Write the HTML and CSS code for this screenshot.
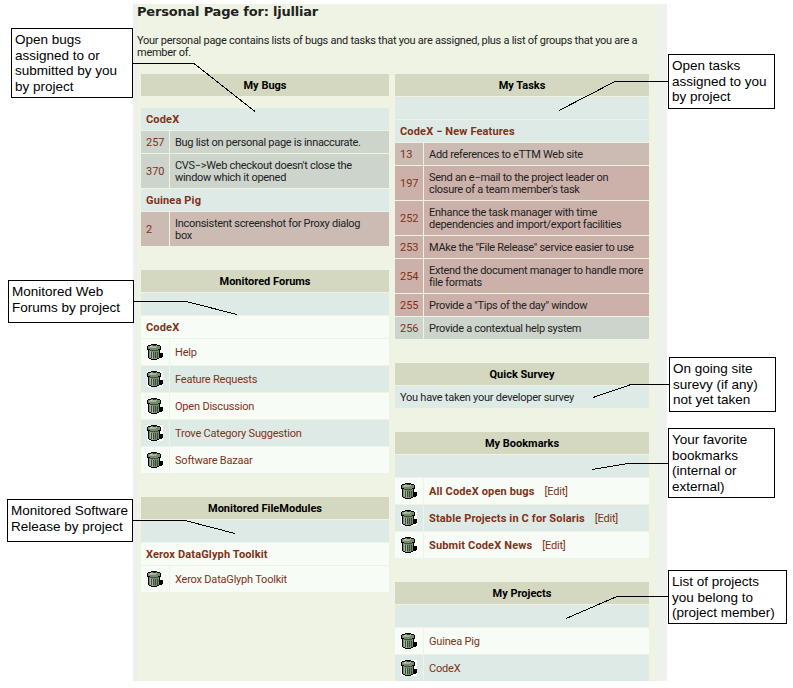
FILE: index.html
```
<!DOCTYPE html>
<html lang="en">
<head>
<meta charset="utf-8">
<title>Personal Page for: ljulliar</title>
<link rel="stylesheet" href="styles.css">
</head>
<body>
<svg class="defs" aria-hidden="true">
  <symbol id="trash" viewBox="0 0 16 16" shape-rendering="crispEdges">
    <path fill="#000" d="M4 0h6v1h3v1h1v4h-1v3h3v4h-1v1h-3v1h-2v1H4v-1H2v-1H1V6H0V2h1V1h3z"/>
    <path fill="#75896e" d="M4 1h6v1h3v3h-2v1H3V5H1V2h3z"/>
    <path fill="#a3b497" d="M3 2h7v1H9v1H2V3h1z"/>
    <path fill="#c3cfb8" d="M3 2h2v1H3z"/>
    <path fill="#283728" d="M6 1h3v1H6z"/>
    <path fill="#75896e" d="M2 6h10v8h-2v1H4v-1H2z"/>
    <path fill="#a4b599" d="M3 7h1v7H3zM5 8h1v7H5z"/>
    <path fill="#3c4e3b" d="M3 6h8v1H3zM4 8h1v6H4zM6 8h1v6H6zM8 8h1v6H8zM10 8h1v6h-1z"/>
  </symbol>
</svg>
<main class="page">
  <h1>Personal Page for: ljulliar</h1>
  <p class="intro">Your personal page contains lists of bugs and tasks that you are assigned, plus a list of groups that you are a<br>member of.</p>
  <div class="columns">
    <div class="column">
      <section class="box bugs">
        <h2>My Bugs</h2>
        <h3 class="mint">CodeX</h3>
        <div class="row sage"><a>257</a><span>Bug list on personal page is innaccurate.</span></div>
        <div class="row sage"><a>370</a><span>CVS−&gt;Web checkout doesn't close the<br>window which it opened</span></div>
        <h3 class="mint">Guinea Pig</h3>
        <div class="row clay"><a>2</a><span>Inconsistent screenshot for Proxy dialog<br>box</span></div>
      </section>
      <section class="box">
        <h2>Monitored Forums</h2>
        <div class="blank mint"></div>
        <h3 class="light">CodeX</h3>
        <div class="row item light"><i><svg><use href="#trash"/></svg></i><a>Help</a></div>
        <div class="row item mint"><i><svg><use href="#trash"/></svg></i><a>Feature Requests</a></div>
        <div class="row item light"><i><svg><use href="#trash"/></svg></i><a>Open Discussion</a></div>
        <div class="row item mint"><i><svg><use href="#trash"/></svg></i><a>Trove Category Suggestion</a></div>
        <div class="row item light"><i><svg><use href="#trash"/></svg></i><a>Software Bazaar</a></div>
      </section>
      <section class="box">
        <h2>Monitored FileModules</h2>
        <div class="blank mint"></div>
        <h3 class="light">Xerox DataGlyph Toolkit</h3>
        <div class="row item light"><i><svg><use href="#trash"/></svg></i><a>Xerox DataGlyph Toolkit</a></div>
      </section>
    </div>
    <div class="column">
      <section class="box">
        <h2>My Tasks</h2>
        <div class="blank mint"></div>
        <h3 class="mint">CodeX − New Features</h3>
        <div class="row clay"><a>13</a><span>Add references to eTTM Web site</span></div>
        <div class="row rose"><a>197</a><span>Send an e−mail to the project leader on<br>closure of a team member's task</span></div>
        <div class="row rose"><a>252</a><span>Enhance the task manager with time<br>dependencies and import/export facilities</span></div>
        <div class="row rose"><a>253</a><span>MAke the "File Release" service easier to use</span></div>
        <div class="row rose"><a>254</a><span>Extend the document manager to handle more<br>file formats</span></div>
        <div class="row rose"><a>255</a><span>Provide a "Tips of the day" window</span></div>
        <div class="row sage"><a>256</a><span>Provide a contextual help system</span></div>
      </section>
      <section class="box">
        <h2>Quick Survey</h2>
        <p class="note mint">You have taken your developer survey</p>
      </section>
      <section class="box">
        <h2>My Bookmarks</h2>
        <div class="blank mint"></div>
        <div class="row item light"><i><svg><use href="#trash"/></svg></i><a><b>All CodeX open bugs</b>[Edit]</a></div>
        <div class="row item mint"><i><svg><use href="#trash"/></svg></i><a><b>Stable Projects in C for Solaris</b>[Edit]</a></div>
        <div class="row item light"><i><svg><use href="#trash"/></svg></i><a><b>Submit CodeX News</b>[Edit]</a></div>
      </section>
      <section class="box">
        <h2>My Projects</h2>
        <div class="blank mint"></div>
        <div class="row item light"><i><svg><use href="#trash"/></svg></i><a>Guinea Pig</a></div>
        <div class="row item mint"><i><svg><use href="#trash"/></svg></i><a>CodeX</a></div>
      </section>
    </div>
  </div>
</main>
<svg class="leaders" viewBox="0 0 793 688" aria-hidden="true">
  <path d="M132 63.5H194L255 111.5M669 81.5H615L559 110.5M133 301.5H186L237 314.5M669 384.5H631L593 397.5M669 463.5H628L592 469.5M132 520.5H185L235 533.5M669 596.5H617L566 618.5"/>
</svg>
<aside class="callout c-bugs">Open bugs<br>assigned to or<br>submitted by you<br>by project</aside>
<aside class="callout c-tasks">Open tasks<br>assigned to you<br>by project</aside>
<aside class="callout c-forums">Monitored Web<br>Forums by project</aside>
<aside class="callout c-files">Monitored Software<br>Release by project</aside>
<aside class="callout c-survey">On going site<br>surevy (if any)<br>not yet taken</aside>
<aside class="callout c-marks">Your favorite<br>bookmarks<br>(internal or<br>external)</aside>
<aside class="callout c-projects">List of projects<br>you belong to<br>(project member)</aside>
</body>
</html>
```
FILE: styles.css
```
* { box-sizing: border-box; }
body {
  margin: 0;
  position: relative;
  width: 793px;
  height: 688px;
  overflow: hidden;
  background: #fff;
  font: 11px/12px Roboto, "Liberation Sans", sans-serif;
  color: #222;
}
.defs { display: none; }
h1, h2, h3, p { margin: 0; }
.page {
  width: 534px;
  height: 677px;
  margin: 4px 0 0 133px;
  border-left: 4px solid #eee;
  border-right: 10px solid #edf2ee;
  background: #eff3e4;
}
h1 { font: bold 13px/16px "DejaVu Sans", sans-serif; letter-spacing: -0.2px; white-space: nowrap; }
.intro { margin: 15px 0; height: 24px; white-space: nowrap; letter-spacing: -0.265px; }
.columns { display: grid; grid-template-columns: 248px 254px; gap: 6px; padding-left: 4px; }
.column { display: flex; flex-direction: column; gap: 24px; }
.box { display: flex; flex-direction: column; gap: 1px; }
h2, h3 { font-size: 11px; line-height: 12px; padding: 6px 5px 4px; }
h2 { background: #d4d8c1; color: #000; text-align: center; }
h3, a { color: #803218; }
h3, b { letter-spacing: 0.15px; }
.bugs h2 { margin-bottom: 11px; }
.blank { height: 22px; }
.note { padding: 6px 5px 4px; letter-spacing: -0.25px; }
.row { display: grid; grid-template-columns: 28px 1fr; gap: 1px; }
.row > * { display: flex; align-items: center; padding: 6px 5px 4px; background: var(--fill); white-space: nowrap; }
.row > span { letter-spacing: -0.29px; }
.item { height: 26px; }
.item a { letter-spacing: -0.2px; }
.item b { margin-right: 10px; }
.item i { padding: 5px 6px; }
.item svg { width: 16px; height: 16px; flex: none; }
.item.mint svg { background: #fff; }
.mint { --fill: #deeae6; }
.light { --fill: #f8fcf6; }
.sage { --fill: #cdd4cc; }
.clay { --fill: #ccbbb3; }
.rose { --fill: #ccb1aa; }
h3, .blank, .note { background: var(--fill); }
.leaders { position: absolute; left: 0; top: 0; width: 793px; height: 688px; fill: none; stroke: #000; shape-rendering: crispEdges; }
.callout {
  position: absolute;
  border: 1px solid #000;
  background: #fff;
  color: #000;
  padding: 3px;
  font: 13.5px/15.67px "Liberation Sans", sans-serif;
  white-space: nowrap;
}
.c-bugs { left: 11px; top: 28px; width: 122px; height: 70px; }
.c-tasks { left: 668px; top: 54px; width: 107px; height: 55px; }
.c-forums { left: 8px; top: 280px; width: 126px; height: 43px; }
.c-files { left: 7px; top: 499px; width: 126px; height: 43px; }
.c-survey { left: 669px; top: 357px; width: 107px; height: 55px; }
.c-marks { left: 668px; top: 428px; width: 107px; height: 70px; }
.c-projects { left: 668px; top: 570px; width: 119px; height: 54px; }
```
